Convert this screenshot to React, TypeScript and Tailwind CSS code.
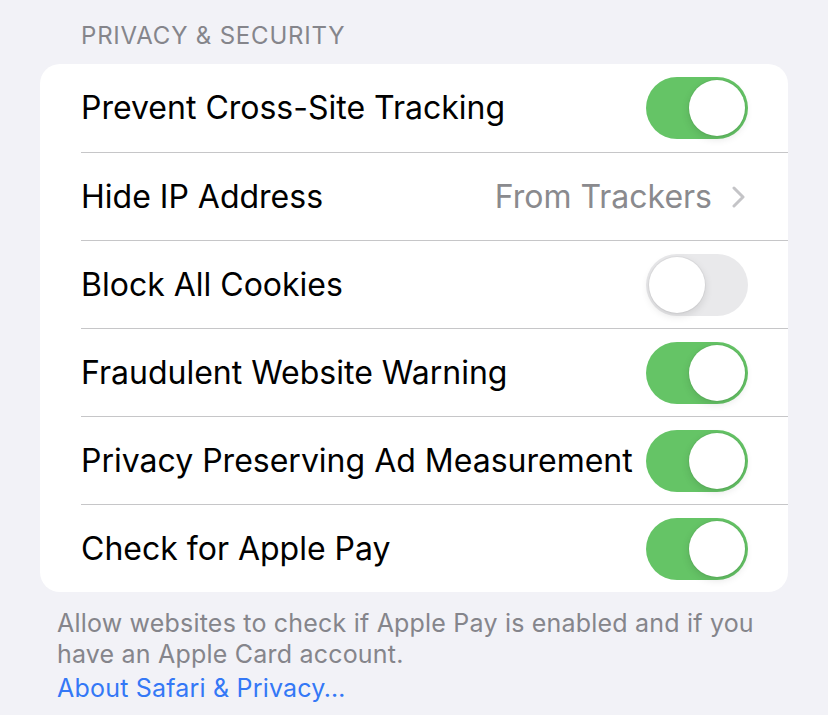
import React from "react";

type Row =
  | { label: string; kind: "toggle"; on: boolean }
  | { label: string; kind: "detail"; value: string };

const rows: Row[] = [
  { label: "Prevent Cross-Site Tracking", kind: "toggle", on: true },
  { label: "Hide IP Address", kind: "detail", value: "From Trackers" },
  { label: "Block All Cookies", kind: "toggle", on: false },
  { label: "Fraudulent Website Warning", kind: "toggle", on: true },
  { label: "Privacy Preserving Ad Measurement", kind: "toggle", on: true },
  { label: "Check for Apple Pay", kind: "toggle", on: true },
];

function Toggle({ on }: { on: boolean }) {
  return (
    <div
      className={
        on
          ? "flex h-[62px] w-[102px] shrink-0 items-center justify-end rounded-full bg-[#65c466] p-[3px]"
          : "flex h-[62px] w-[102px] shrink-0 items-center justify-start rounded-full bg-[#e9e9eb] p-[3px]"
      }
    >
      <span className="size-[56px] rounded-full bg-white shadow-[0_3px_8px_rgba(0,0,0,0.12),0_0_0_1px_rgba(0,0,0,0.04)]" />
    </div>
  );
}

export default function App() {
  return (
    <div className="min-h-[715px] w-[828px] bg-[#f2f2f7] font-['Inter','Noto_Sans',sans-serif] antialiased">
      <div className="px-[81px] pt-[21px] pb-[13px] text-[24px] leading-[30px] tracking-[0.8px] text-[#85858b]">
        PRIVACY &amp; SECURITY
      </div>
      <div className="mx-[40px] overflow-hidden rounded-[20px] bg-white">
        {rows.map((r, i) => (
          <div key={r.label} className="flex h-[88px] pl-[41px]">
            <div
              className={
                i === 0
                  ? "flex flex-1 items-center justify-between pr-[40px]"
                  : "flex flex-1 items-center justify-between border-t border-[#c6c6c8] pr-[40px]"
              }
            >
              <span className="whitespace-nowrap text-[32px] text-black">{r.label}</span>
              {r.kind === "toggle" ? (
                <Toggle on={r.on} />
              ) : (
                <span className="flex items-center gap-[20px] whitespace-nowrap text-[32px] text-[#8a8a8e]">
                  {r.value}
                  <svg width="13" height="22" viewBox="0 0 13 22" fill="none" className="mr-[3px]">
                    <path d="M2 2l9 9-9 9" stroke="#c4c4c7" strokeWidth="3" strokeLinecap="round" strokeLinejoin="round" />
                  </svg>
                </span>
              )}
            </div>
          </div>
        ))}
      </div>
      <div className="px-[57px] pt-[16px] text-[25px] leading-[31px] tracking-[0.2px] text-[#85858b]">
        <p>Allow websites to check if Apple Pay is enabled and if you have an Apple Card account.</p>
        <p className="mt-[3px] text-[#3478f6]">About Safari &amp; Privacy…</p>
      </div>
    </div>
  );
}
